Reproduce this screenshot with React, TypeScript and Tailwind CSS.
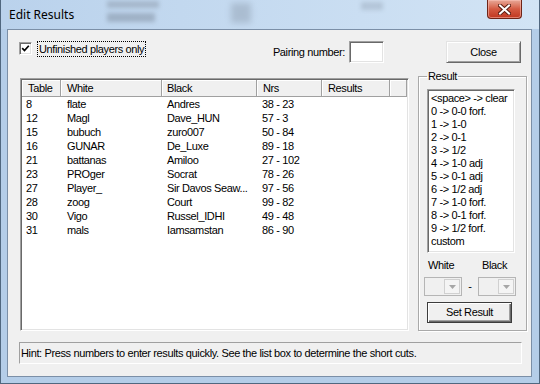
import React from "react";

const rows = [
  ["8", "flate", "Andres", "38 - 23"],
  ["12", "Magl", "Dave_HUN", "57 - 3"],
  ["15", "bubuch", "zuro007", "50 - 84"],
  ["16", "GUNAR", "De_Luxe", "89 - 18"],
  ["21", "battanas", "Amiloo", "27 - 102"],
  ["23", "PROger", "Socrat", "78 - 26"],
  ["27", "Player_", "Sir Davos Seaw...", "97 - 56"],
  ["28", "zoog", "Court", "99 - 82"],
  ["30", "Vigo", "Russel_IDHI", "49 - 48"],
  ["31", "mals", "Iamsamstan", "86 - 90"],
];

const shortcuts = [
  "<space> -> clear",
  "0 -> 0-0 forf.",
  "1 -> 1-0",
  "2 -> 0-1",
  "3 -> 1/2",
  "4 -> 1-0 adj",
  "5 -> 0-1 adj",
  "6 -> 1/2 adj",
  "7 -> 1-0 forf.",
  "8 -> 0-1 forf.",
  "9 -> 1/2 forf.",
  "custom",
];

const sunken =
  "border border-t-[#a0a0a0] border-l-[#a0a0a0] border-r-white border-b-white shadow-[inset_1px_1px_0_#696969,inset_-1px_-1px_0_#e3e3e3]";
const raised =
  "border border-t-[#e3e3e3] border-l-[#e3e3e3] border-r-[#696969] border-b-[#696969] shadow-[inset_1px_1px_0_#fff,inset_-1px_-1px_0_#a0a0a0]";

function HeaderCell({ label, pad }: { label: string; pad: string }) {
  return (
    <div
      className={`flex h-[17px] items-center border-r border-b border-[#a0a0a0] bg-[#f0f0f0] shadow-[inset_1px_1px_0_#fff] ${pad}`}
    >
      {label}
    </div>
  );
}

function Combo() {
  return (
    <div className="flex h-[19px] w-[38px] justify-end border border-[#b5b5b5] bg-[#f0f0f0] p-[1px]">
      <div className="flex h-full w-[16px] items-center justify-center border border-[#d0d0d0] bg-[#f4f4f4]">
        <svg width="7" height="4" viewBox="0 0 7 4">
          <path d="M0 0h7L3.5 4z" fill="#a6a6a6" />
        </svg>
      </div>
    </div>
  );
}

export default function App() {
  return (
    <div className="flex h-[384px] w-[540px] flex-col overflow-hidden border-x border-b border-[#50677f] bg-[#b4cde8] pb-[6px] pl-[6px] pr-[7px] font-['Liberation_Sans',Arial,sans-serif] text-[11px] tracking-[-0.37px] text-black">
      {/* title bar */}
      <div className="relative -ml-[6px] -mr-[7px] flex h-[29px] shrink-0 items-center bg-gradient-to-r from-[#bad2ec] to-[#d2e4f5] pl-[8px]">
        <div className="absolute left-[106px] top-[1px] h-[7px] w-[52px] bg-[#7d8897] opacity-40 blur-[2px]" />
        <div className="absolute left-[106px] top-[13px] h-[9px] w-[48px] bg-[#6f7b8b] opacity-40 blur-[2px]" />
        <div className="absolute left-[230px] top-[3px] h-[20px] w-[20px] bg-[#6f7b8b] opacity-30 blur-[3px]" />
        <div className="absolute left-[360px] top-[2px] h-[8px] w-[22px] bg-[#6f7b8b] opacity-25 blur-[2px]" />
        <span className="relative font-['Noto_Sans',sans-serif] text-[12px] tracking-normal text-black">Edit Results</span>
        <div className="relative ml-auto mr-[17px] flex h-[19px] w-[35px] items-center justify-center self-start rounded-b-[4px] border border-t-0 border-[#6e2417] bg-gradient-to-b from-[#e7a898] via-[#d45a42] to-[#c0361f] shadow-[inset_0_0_0_1px_rgba(255,200,190,0.5)]">
          <svg width="13" height="11" viewBox="0 0 13 11">
            <path d="M2 1.5l9 8M11 1.5l-9 8" stroke="#5a1d12" strokeWidth="4" strokeLinecap="square" />
            <path d="M2 1.5l9 8M11 1.5l-9 8" stroke="#fff" strokeWidth="2" strokeLinecap="square" />
          </svg>
        </div>
      </div>

      {/* client area */}
      <div className="flex flex-1 flex-col border border-[#7b8fa7] bg-[#f0f0f0]">
        <div className="mt-[11px] flex h-[22px] items-start pl-[11px]">
          <div className={`mt-[1px] flex h-[13px] w-[13px] items-center justify-center bg-white ${sunken}`}>
            <svg width="9" height="9" viewBox="0 0 9 9">
              <path d="M1.2 4.2l2.3 2.4L7.8 1.8" stroke="#000" strokeWidth="1.7" fill="none" />
            </svg>
          </div>
          <div className="ml-[5px] flex h-[16px] w-[109px] items-center whitespace-nowrap border border-dotted border-black pl-[1px]">
            Unfinished players only
          </div>
          <div className="flex h-[22px] w-[199px] items-center justify-end whitespace-nowrap">Pairing number:</div>
          <div className={`ml-[4px] h-[22px] w-[35px] bg-white ${sunken}`} />
          <button className={`ml-[62px] flex h-[22px] w-[75px] items-center justify-center bg-[#f0f0f0] ${raised}`}>
            Close
          </button>
        </div>

        <div className="mt-[7px] flex items-start">
          {/* list view */}
          <div className={`ml-[12px] mt-[8px] flex h-[253px] w-[389px] flex-col bg-white p-[1px] ${sunken}`}>
            <div className="grid grid-cols-[39px_101px_95px_65px_68px_17px]">
              <HeaderCell label="Table" pad="pl-[6px]" />
              <HeaderCell label="White" pad="pl-[6px]" />
              <HeaderCell label="Black" pad="pl-[5px]" />
              <HeaderCell label="Nrs" pad="pl-[6px]" />
              <HeaderCell label="Results" pad="pl-[6px]" />
              <HeaderCell label="" pad="pl-0" />
            </div>
            {rows.map((r) => (
              <div key={r[0]} className="grid h-[14px] grid-cols-[39px_101px_95px_65px_68px] leading-[14px]">
                <span className="pl-[4px]">{r[0]}</span>
                <span className="pl-[6px]">{r[1]}</span>
                <span className="pl-[5px]">{r[2]}</span>
                <span className="pl-[5px]">{r[3]}</span>
                <span />
              </div>
            ))}
          </div>

          {/* result group */}
          <fieldset className="ml-[9px] h-[261px] w-[109px] border border-[#a9a9a9] px-[8px] shadow-[inset_1px_1px_0_#fff,1px_1px_0_#fff]">
            <legend className="px-[1px] leading-[12px]">Result</legend>
            <div className={`mt-[7px] h-[164px] w-[88px] overflow-hidden bg-white p-[1px] ${sunken}`}>
              <div className="pl-[2px] pt-[1px]">
                {shortcuts.map((s) => (
                  <div key={s} className="h-[13px] whitespace-nowrap leading-[13px]">
                    {s}
                  </div>
                ))}
              </div>
            </div>
            <div className="mt-[6px] flex h-[12px] items-center leading-[12px]">
              <span className="w-[54px] pl-[1px]">White</span>
              <span className="pl-[1px]">Black</span>
            </div>
            <div className="-ml-[3px] mt-[6px] flex h-[19px] items-center">
              <Combo />
              <span className="w-[16px] text-center">-</span>
              <Combo />
            </div>
            <button className="mt-[6px] flex h-[21px] w-[85px] items-center justify-center border border-[#3c3c3c] bg-[#f0f0f0] shadow-[inset_1px_1px_0_#fff,inset_-1px_-1px_0_#696969,inset_-2px_-2px_0_#a0a0a0]">
              Set Result
            </button>
          </fieldset>
        </div>

        <div className="ml-[11px] mt-[11px] flex h-[22px] w-[503px] items-center whitespace-nowrap border border-t-[#a0a0a0] border-l-[#a0a0a0] border-r-white border-b-white pl-[1px]">
          Hint: Press numbers to enter results quickly. See the list box to determine the short cuts.
        </div>
      </div>
    </div>
  );
}
